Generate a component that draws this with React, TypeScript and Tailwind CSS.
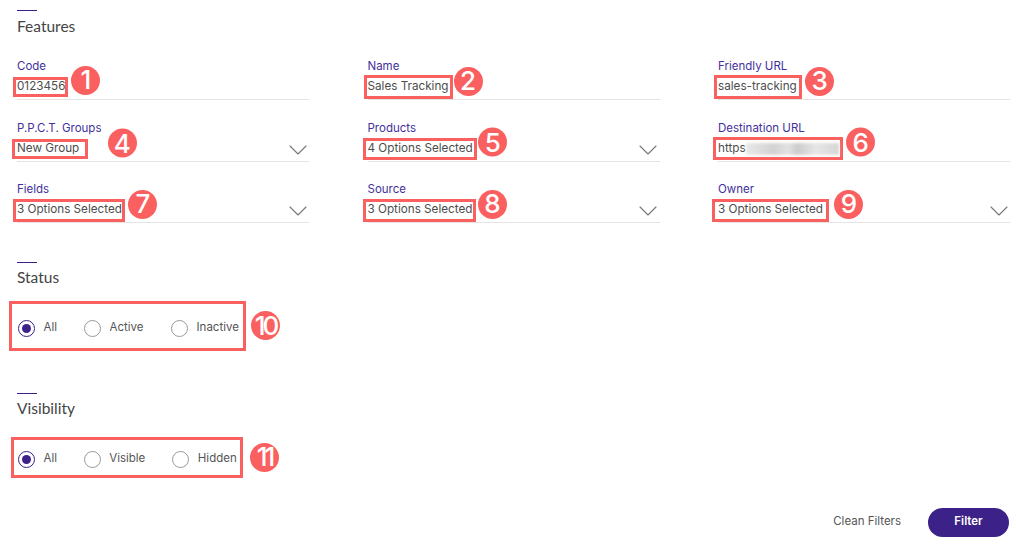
import { ChevronDown } from "lucide-react";

interface Campo {
  label: string;
  valor: string;
  num: number;
  select?: boolean;
  borrado?: boolean;
  caixa: string;
  badge: string;
}

const CAMPOS: Campo[] = [
  { label: "Code", valor: "0123456", num: 1, caixa: "-ml-[4px] pl-[4px] pr-[3px] h-[20px]", badge: "ml-[3px] -translate-y-[7px]" },
  { label: "Name", valor: "Sales Tracking", num: 2, caixa: "-ml-[4px] pl-[4px] pr-[4px] h-[24px]", badge: "ml-[1px] -translate-y-[6px]" },
  { label: "Friendly URL", valor: "sales-tracking", num: 3, caixa: "-ml-[4px] pl-[4px] pr-[5px] h-[24px]", badge: "ml-[3.5px] -translate-y-[6px]" },
  { label: "P.P.C.T. Groups", valor: "New Group", num: 4, select: true, caixa: "-ml-[5px] pl-[5px] pr-[9px] h-[20px]", badge: "ml-[19.5px] -translate-y-[5.5px]" },
  { label: "Products", valor: "4 Options Selected", num: 5, select: true, caixa: "-ml-[5px] pl-[5px] pr-[4px] h-[22px]", badge: "ml-[1.5px] -translate-y-[6.5px]" },
  { label: "Destination URL", valor: "https", num: 6, borrado: true, caixa: "-ml-[5px] pl-[5px] pr-[4px] h-[23px]", badge: "ml-[3.5px] -translate-y-[6.5px]" },
  { label: "Fields", valor: "3 Options Selected", num: 7, select: true, caixa: "-ml-[4px] pl-[4px] pr-[3px] h-[23px]", badge: "ml-[3.5px] -translate-y-[6px]" },
  { label: "Source", valor: "3 Options Selected", num: 8, select: true, caixa: "-ml-[5px] pl-[5px] pr-[4px] h-[23px]", badge: "ml-[1.5px] -translate-y-[6px]" },
  { label: "Owner", valor: "3 Options Selected", num: 9, select: true, caixa: "-ml-[6px] pl-[6px] pr-[6px] h-[23px]", badge: "ml-[5.5px] -translate-y-[6px]" },
];

function Badge({ num, className }: { num: number; className?: string }) {
  return (
    <span
      className={`flex h-[29px] w-[29px] shrink-0 items-center justify-center rounded-full bg-[#fa6060] font-['Inter',sans-serif] text-[26px] font-medium leading-none text-white ${num > 9 ? "tracking-[-3px]" : ""} ${className ?? ""}`}
    >
      {num}
    </span>
  );
}

function Secao({ titulo }: { titulo: string }) {
  return (
    <div>
      <div className="h-px w-[20px] bg-[#3c2188]" />
      <h2 className="mt-[5.5px] font-['Lato',sans-serif] text-[15.5px] leading-[18px] text-[#444444]">
        {titulo}
      </h2>
    </div>
  );
}

function CampoFiltro({ campo }: { campo: Campo }) {
  return (
    <div className="h-[61.5px]">
      <label className="block h-[14px] pt-px text-[11.5px] leading-[14px] text-[#43309c]">
        {campo.label}
      </label>
      <div className="relative flex h-[28px] items-center border-b border-[#e4e4e4] pt-[3px]">
        <span
          className={`flex items-center whitespace-nowrap text-[11.7px] text-[#4d4d4d] outline-[3px] -outline-offset-[3px] outline-[#fa6060] ${campo.caixa}`}
        >
          {campo.valor}
          {campo.borrado && (
            <span className="h-[12px] w-[93px] bg-[linear-gradient(90deg,#e8e8e8,#d2d2d2_30%,#e2e2e2_45%,#cbcbcb_55%,#e6e6e6_75%,#d6d6d6)] blur-[1.5px]" />
          )}
        </span>
        <Badge num={campo.num} className={campo.badge} />
        {campo.select && (
          <ChevronDown
            className="absolute -right-[4.5px] top-0 h-[32px] w-[32px] text-[#777777]"
            strokeWidth={0.85}
          />
        )}
      </div>
    </div>
  );
}

function Radio({ label, ativo, className }: { label: string; ativo?: boolean; className: string }) {
  return (
    <span className={`flex items-center gap-[8.5px] ${className}`}>
      <span
        className={`flex h-[17px] w-[17px] items-center justify-center rounded-full border-[1.5px] ${
          ativo ? "border-[#3c2188]" : "border-[#999999]"
        }`}
      >
        {ativo && <span className="h-[9px] w-[9px] rounded-full bg-[#3c2188]" />}
      </span>
      <span className="text-[11.5px] text-[#555555]">{label}</span>
    </span>
  );
}

export default function App() {
  return (
    <div className="h-[556px] w-[1016px] overflow-hidden bg-white pl-[17px] pr-[6px] pt-[10px] font-['Inter',sans-serif]">
      <Secao titulo="Features" />

      <div className="mt-[23.5px] grid grid-cols-3 gap-x-[58.5px]">
        {CAMPOS.map((c) => (
          <CampoFiltro key={c.num} campo={c} />
        ))}
      </div>

      <div className="mt-[19px]">
        <Secao titulo="Status" />
        <div className="mt-[14.5px] flex items-center">
          <div className="-ml-[8px] flex h-[50px] w-[237px] items-center border-[3px] border-[#fa6060] pl-[6px] pt-[5px]">
            <Radio label="All" ativo className="w-[66px]" />
            <Radio label="Active" className="w-[87px]" />
            <Radio label="Inactive" className="w-[70px]" />
          </div>
          <Badge num={10} className="ml-[5px]" />
        </div>
      </div>

      <div className="mt-[42px]">
        <Secao titulo="Visibility" />
        <div className="mt-[19.5px] flex items-center">
          <div className="-ml-[6px] flex h-[41px] w-[232px] items-center border-[3px] border-[#fa6060] pl-[4px] pt-[4px]">
            <Radio label="All" ativo className="w-[66px]" />
            <Radio label="Visible" className="w-[89px]" />
            <Radio label="Hidden" className="w-[68px]" />
          </div>
          <Badge num={11} className="ml-[7px]" />
        </div>
      </div>

      <div className="mt-[30px] flex items-center justify-end gap-[27px] pr-px">
        <button type="button" className="text-[11.5px] text-[#555555]">
          Clean Filters
        </button>
        <button
          type="button"
          className="h-[29px] w-[81px] rounded-full bg-[#3c2188] text-[11.5px] font-semibold text-white"
        >
          Filter
        </button>
      </div>
    </div>
  );
}
